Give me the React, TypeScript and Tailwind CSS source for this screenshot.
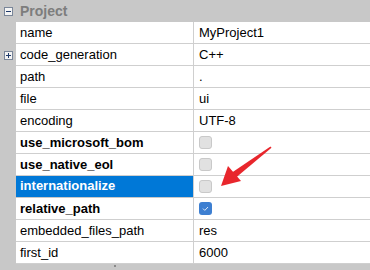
import React from 'react'

type Row = {
  name: string
  value?: string
  bold?: boolean
  check?: 'off' | 'on'
  expand?: boolean
  selected?: boolean
}

const rows: Row[] = [
  { name: 'name', value: 'MyProject1' },
  { name: 'code_generation', value: 'C++', expand: true },
  { name: 'path', value: '.' },
  { name: 'file', value: 'ui' },
  { name: 'encoding', value: 'UTF-8' },
  { name: 'use_microsoft_bom', bold: true, check: 'off' },
  { name: 'use_native_eol', bold: true, check: 'off' },
  { name: 'internationalize', bold: true, check: 'off', selected: true },
  { name: 'relative_path', bold: true, check: 'on' },
  { name: 'embedded_files_path', value: 'res' },
  { name: 'first_id', value: '6000' },
]

function BoxIcon({ minus }: { minus?: boolean }) {
  return (
    <svg width="9" height="9" viewBox="0 0 9 9">
      <rect x="0.5" y="0.5" width="8" height="8" fill="#f4f4f4" stroke="#7a8699" />
      <path d="M2 4.5h5" stroke="#1f3a6b" strokeWidth="1" />
      {!minus && <path d="M4.5 2v5" stroke="#1f3a6b" strokeWidth="1" />}
    </svg>
  )
}

function Check({ on }: { on?: boolean }) {
  if (on) {
    return (
      <div className="w-[13px] h-[13px] rounded-[3px] bg-[#3d7fd1] flex items-center justify-center">
        <svg width="9" height="9" viewBox="0 0 9 9">
          <path d="M2 4.6l1.8 1.8L7 3" stroke="#dfe9f7" strokeWidth="1" fill="none" />
        </svg>
      </div>
    )
  }
  return <div className="w-[13px] h-[13px] rounded-[3px] bg-[#e1e1e1] border border-[#c9c9c9]" />
}

export default function App() {
  return (
    <div
      className="relative w-[370px] h-[270px] overflow-hidden bg-[#c8c8c8] text-[13px] text-black"
      style={{ fontFamily: '"Liberation Sans", Arial, sans-serif' }}
    >
      <div className="h-[22px] flex items-center">
        <div className="w-[16px] flex justify-center pl-[1px]">
          <BoxIcon minus />
        </div>
        <span className="pl-[4px] text-[14px] font-bold text-[#7d7d7d]">Project</span>
      </div>

      {rows.map((r) => (
        <div key={r.name} className="h-[22px] flex">
          <div className="w-[16px] flex items-center justify-center pl-[1px]">
            {r.expand && <BoxIcon />}
          </div>
          <div
            className={
              r.selected
                ? 'w-[177px] h-[21px] flex items-center pl-[4px] bg-[#0078d7] text-white font-bold border-b border-[#0078d7]'
                : 'w-[177px] h-[22px] flex items-center pl-[4px] bg-white border-b border-[#cfcfcf]' +
                  (r.bold ? ' font-bold' : '')
            }
          >
            {r.name}
          </div>
          <div className="flex-1 h-[22px] flex items-center pl-[5px] bg-white border-b border-l border-[#cfcfcf]">
            {r.check ? <Check on={r.check === 'on'} /> : r.value}
          </div>
        </div>
      ))}

      <div className="absolute left-[114px] top-[265px] w-[2px] h-[2px] bg-[#8a8a8a]" />

      <svg className="absolute left-0 top-0" width="370" height="270" viewBox="0 0 370 270">
        <path d="M270.5 146.5 L271.5 147.8 L236 177.5 L232 172.5 Z" fill="#e8262c" />
        <path d="M221 186 L228 166 L241 181 Z" fill="#e8262c" />
      </svg>
    </div>
  )
}
